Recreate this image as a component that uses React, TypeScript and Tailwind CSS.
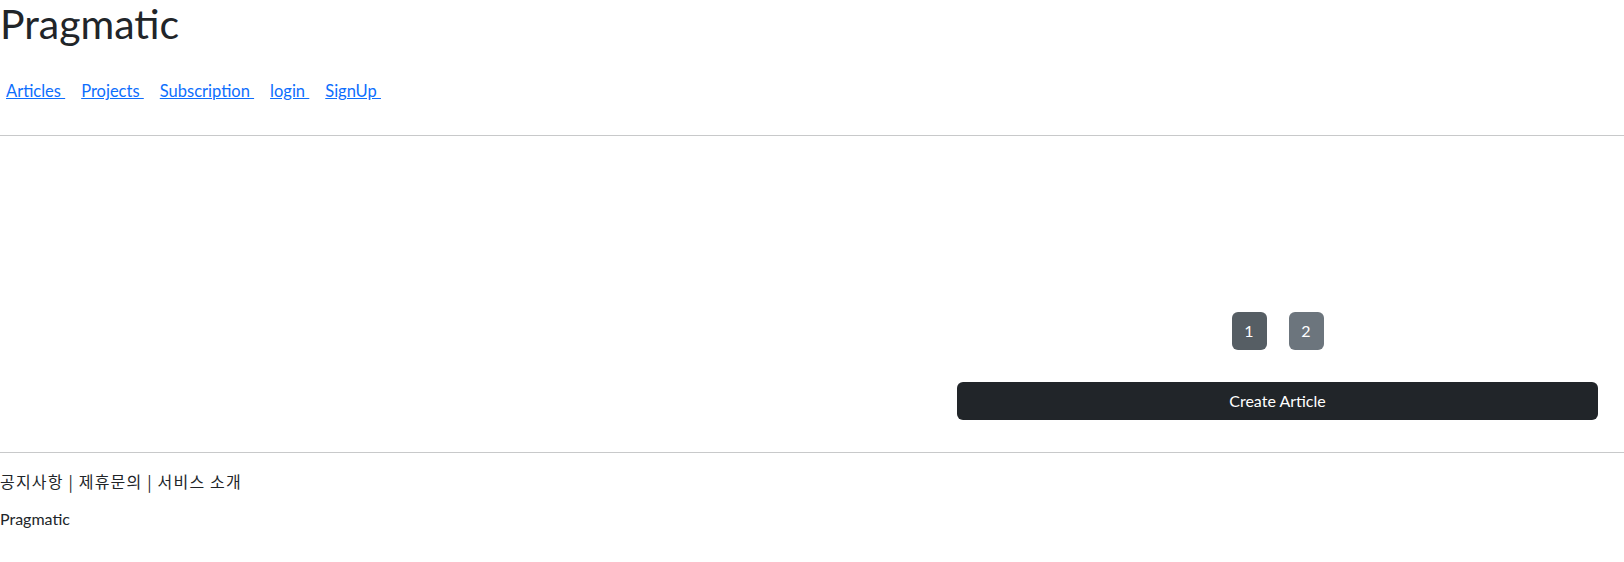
import React from 'react';

const navLinks = ['Articles', 'Projects', 'Subscription', 'login', 'SignUp'];

const App: React.FC = () => {
  return (
    <div className="bg-white text-[#212529] font-['Lato','Noto_Sans_CJK_KR',sans-serif]">
      {/* Header */}
      <div>
        <h1 className="text-[41px] leading-[48px] font-normal">Pragmatic</h1>
        <div className="flex pl-[6px] pt-[30px] pb-[30px] text-[16.5px] leading-[27px]">
          {navLinks.map((link) => (
            <a key={link} href="#" className="text-[#0d6efd] underline mr-[16px]">
              {link + '\u00a0'}
            </a>
          ))}
        </div>
        <div className="h-px bg-[#c8c9ca]" />
      </div>

      {/* Content */}
      <div className="flex justify-end pt-[176px] pb-[32px]">
        <div className="w-[641px] mr-[26px] flex flex-col items-center">
          <div className="flex gap-[22px] text-[16px]">
            <button className="w-[35px] h-[38px] rounded-md bg-[#565e64] text-white">1</button>
            <button className="w-[35px] h-[38px] rounded-md bg-[#6c757d] text-white">2</button>
          </div>
          <button className="mt-[32px] w-full h-[38px] rounded-md bg-[#212529] text-white text-[16px]">
            Create Article
          </button>
        </div>
      </div>

      {/* Footer */}
      <div className="h-px bg-[#c8c9ca]" />
      <div className="pt-[16px] pb-[31px] text-[16px] leading-[24px]">
        <div className="font-['Noto_Sans_CJK_KR',sans-serif] tracking-[1.2px]">공지사항 | 제휴문의 | 서비스 소개</div>
        <div className="mt-[14px]">Pragmatic</div>
      </div>
    </div>
  );
};

export default App;
